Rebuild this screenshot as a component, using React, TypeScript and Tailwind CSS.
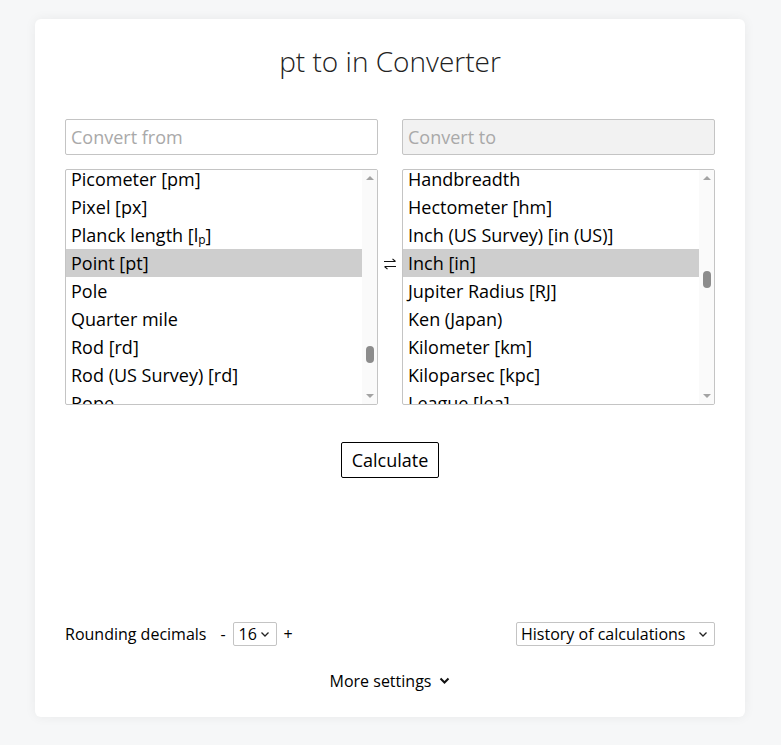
import React from "react";

const leftItems: React.ReactNode[] = [
  "Picometer [pm]",
  "Pixel [px]",
  <>Planck length [l<sub className="text-[12px] relative top-[2px]">p</sub>]</>,
  "Point [pt]",
  "Pole",
  "Quarter mile",
  "Rod [rd]",
  "Rod (US Survey) [rd]",
  "Rope",
];
const rightItems: React.ReactNode[] = [
  "Handbreadth",
  "Hectometer [hm]",
  "Inch (US Survey) [in (US)]",
  "Inch [in]",
  "Jupiter Radius [RJ]",
  "Ken (Japan)",
  "Kilometer [km]",
  "Kiloparsec [kpc]",
  "League [lea]",
];

function ListBox({ items, selected, thumbTop }: { items: React.ReactNode[]; selected: number; thumbTop: number }) {
  return (
    <div className="flex h-[236px] w-[313px] border border-[#c4c4c4] rounded-[2px] bg-white overflow-hidden">
      <div className="flex-1 overflow-hidden">
        <div className="mt-[-5px]">
          {items.map((it, i) => (
            <div
              key={i}
              className={`h-[28px] leading-[28px] pl-[5px] text-[18px] text-black whitespace-nowrap ${i === selected ? "bg-[#cecece]" : ""}`}
            >
              {it}
            </div>
          ))}
        </div>
      </div>
      <div className="w-[15px] bg-[#fafafa] flex flex-col items-center">
        <div className="h-[16px] flex items-center justify-center">
          <div className="w-0 h-0 border-l-[4px] border-r-[4px] border-b-[4px] border-l-transparent border-r-transparent border-b-[#a3a3a3]" />
        </div>
        <div className="flex-1 w-full flex flex-col items-center">
          <div className="w-[8px] h-[17px] rounded-[4px] bg-[#8c8c8c]" style={{ marginTop: thumbTop }} />
        </div>
        <div className="h-[16px] flex items-center justify-center">
          <div className="w-0 h-0 border-l-[4px] border-r-[4px] border-t-[4px] border-l-transparent border-r-transparent border-t-[#a3a3a3]" />
        </div>
      </div>
    </div>
  );
}

export default function App() {
  return (
    <div
      className="min-h-[745px] bg-[#f6f7f8] pt-[19px] pl-[35px]"
      style={{ fontFamily: '"Open Sans", "Noto Sans", sans-serif' }}
    >
      <div className="w-[710px] h-[698px] bg-white rounded-[6px] shadow-[0_0_12px_rgba(0,0,0,0.06)] px-[30px] flex flex-col">
        <h1 className="mt-[22px] h-[40px] leading-[40px] text-center text-[28px] font-light text-[#222]">pt to in Converter</h1>
        <div className="mt-[38px] flex justify-between">
          <div className="w-[313px] h-[36px] border border-[#c4c4c4] rounded-[2px] px-[5px] flex items-center text-[18px] text-[#a9a9a9]">
            Convert from
          </div>
          <div className="w-[313px] h-[36px] border border-[#c4c4c4] rounded-[2px] px-[5px] flex items-center text-[18px] text-[#a9a9a9] bg-[#f2f2f2]">
            Convert to
          </div>
        </div>
        <div className="mt-[14px] flex items-center justify-between">
          <ListBox items={leftItems} selected={3} thumbTop={160} />
          <svg className="mt-[-46px]" width="14" height="12" viewBox="0 0 14 12">
            <path d="M1 3.5 H12.5 M9.5 0.8 L12.5 3.5" stroke="#111" strokeWidth="1.1" fill="none" />
            <path d="M1.5 8.5 H13 M1.5 8.5 L4.5 11.2" stroke="#111" strokeWidth="1.1" fill="none" />
          </svg>
          <ListBox items={rightItems} selected={3} thumbTop={85} />
        </div>
        <div className="mt-[37px] flex justify-center">
          <button className="h-[36px] px-[10px] pt-[1px] border border-black rounded-[2px] text-[18px] text-black bg-white">Calculate</button>
        </div>
        <div className="flex-1" />
        <div className="flex items-center justify-between text-[16px] text-black">
          <div className="flex items-center">
            <span>Rounding decimals</span>
            <span className="ml-[14px]">-</span>
            <div className="ml-[7px] w-[44px] h-[24px] border border-[#c4c4c4] rounded-[2px] flex items-center pl-[5px] gap-[3px]">
              <span>16</span>
              <svg width="10" height="7" viewBox="0 0 10 7"><path d="M1.5 1.5 L5 5 L8.5 1.5" stroke="#222" strokeWidth="1.3" fill="none" /></svg>
            </div>
            <span className="ml-[7px]">+</span>
          </div>
          <div className="w-[199px] h-[24px] border border-[#c4c4c4] rounded-[2px] flex items-center justify-between pl-[4px] pr-[6px]">
            <span>History of calculations</span>
            <svg width="10" height="7" viewBox="0 0 10 7"><path d="M1.5 1.5 L5 5 L8.5 1.5" stroke="#222" strokeWidth="1.3" fill="none" /></svg>
          </div>
        </div>
        <div className="mt-[23px] mb-[24px] flex items-center justify-center gap-[8px] text-[16px] text-black h-[24px]">
          <span>More settings</span>
          <svg width="11" height="8" viewBox="0 0 11 8"><path d="M1.5 1.5 L5.5 5.5 L9.5 1.5" stroke="#111" strokeWidth="2" fill="none" /></svg>
        </div>
      </div>
    </div>
  );
}
